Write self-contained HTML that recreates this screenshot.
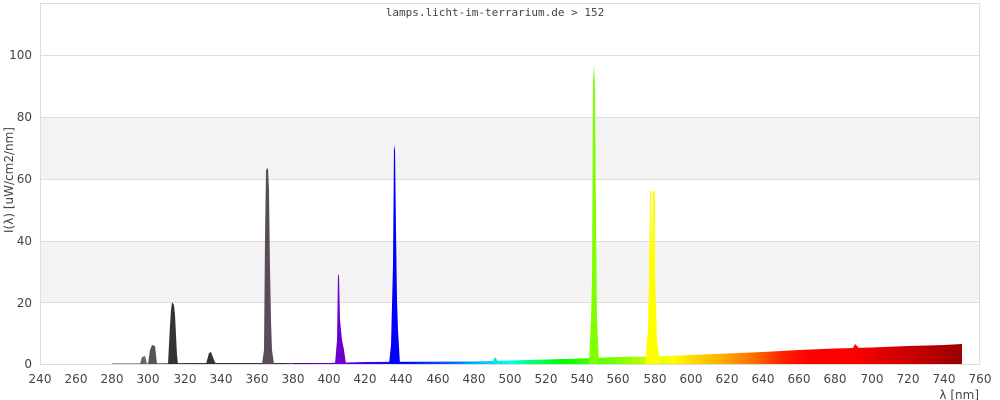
<!DOCTYPE html>
<html><head><meta charset="utf-8"><style>
html,body{margin:0;padding:0;background:#fff;}
svg{display:block;}
.t{font-family:"DejaVu Sans","Liberation Sans",sans-serif;font-size:12px;fill:#444;}
</style></head><body>
<svg width="1000" height="400" viewBox="0 0 1000 400" xmlns="http://www.w3.org/2000/svg">
<defs>
<linearGradient id="g" gradientUnits="userSpaceOnUse" x1="112" y1="0" x2="962" y2="0">
<stop offset="0" stop-color="#444"/>
<stop offset="0.2" stop-color="#333"/>
<stop offset="0.213" stop-color="#555"/>
<stop offset="0.213" stop-color="#5a0060"/>
<stop offset="0.25" stop-color="#6a00cc"/>
<stop offset="0.32" stop-color="#3300ff"/>
<stop offset="0.34" stop-color="#0000ff"/>
<stop offset="0.40" stop-color="#0066ff"/>
<stop offset="0.44" stop-color="#00ccff"/>
<stop offset="0.47" stop-color="#00ffee"/>
<stop offset="0.49" stop-color="#00ff80"/>
<stop offset="0.53" stop-color="#00ff00"/>
<stop offset="0.58" stop-color="#66ff00"/>
<stop offset="0.62" stop-color="#aaff00"/>
<stop offset="0.64" stop-color="#e0ff00"/>
<stop offset="0.66" stop-color="#ffff00"/>
<stop offset="0.69" stop-color="#ffd000"/>
<stop offset="0.72" stop-color="#ffaa00"/>
<stop offset="0.75" stop-color="#ff7700"/>
<stop offset="0.79" stop-color="#ff2000"/>
<stop offset="0.82" stop-color="#ff0000"/>
<stop offset="0.87" stop-color="#ff0000"/>
<stop offset="0.93" stop-color="#d00000"/>
<stop offset="1" stop-color="#990000"/>
</linearGradient>
</defs>
<rect x="40" y="117" width="940" height="62" fill="#f3f3f3"/>
<rect x="40" y="241" width="940" height="61" fill="#f3f3f3"/>
<g stroke="#dedede" stroke-width="1">
<line x1="40" y1="55.5" x2="980" y2="55.5"/>
<line x1="40" y1="117.5" x2="980" y2="117.5"/>
<line x1="40" y1="179.5" x2="980" y2="179.5"/>
<line x1="40" y1="241.5" x2="980" y2="241.5"/>
<line x1="40" y1="302.5" x2="980" y2="302.5"/>
</g>
<rect x="40.5" y="3.5" width="939" height="361" fill="none" stroke="#ddd"/>
<polygon fill="url(#g)" points="112,364 112,363.5 148,363.5 185,363 293,363 329,363 365,362 474,361.5 510,360.5 546,359.5 582,358.5 618,357 655,356.5 691,355 727,353.5 763,352 799,350 835,348.5 872,347.5 908,346 944,345 962,344 962,364"/>
<polygon fill="#666" points="140,364 142,357 145,356 147,364"/>
<polygon fill="#555" points="148,364 150,350 152,345 155,346 157,364"/>
<polygon fill="#333" points="168,364 170,325 171,310 172,302 174,305 175,315 176,335 177,355 178,364"/>
<polygon fill="#333" points="206,364 209,353 211,352 214,360 216,364"/>
<polygon fill="#5a4d5a" points="262,364 264,350 265,240 266,170 268,168 269,190 270,270 271,320 272,350 274,364"/>
<polygon fill="#6a00cc" points="335,364 337,340 338,274 339,276 340,320 342,340 344,350 346,364"/>
<polygon fill="#0000ff" points="389,364 391,345 393,265 394,145 395,150 396,230 397,300 398,330 400,364"/>
<polygon fill="#00f0d0" points="492,362 495,357 497,360 499,362"/>
<polygon fill="#80ff00" points="589,364 591,320 592,280 593,80 594,65 595,90 596,220 597,320 599,364"/>
<polygon fill="#ffff00" points="645,364 648,330 649,280 650,191 651,191 652,260 653,191 655,191 655,270 657,340 660,364"/>
<polygon fill="#ff0000" points="852,350 855,344 858,347 860,350"/>
<g class="t" text-anchor="end">
<text x="32" y="59">100</text>
<text x="32" y="121">80</text>
<text x="32" y="183">60</text>
<text x="32" y="245">40</text>
<text x="32" y="307">20</text>
<text x="32" y="368">0</text>
</g>
<g class="t" text-anchor="middle">
<text x="40" y="383">240</text><text x="76" y="383">260</text><text x="112" y="383">280</text><text x="148" y="383">300</text><text x="185" y="383">320</text><text x="221" y="383">340</text><text x="257" y="383">360</text><text x="293" y="383">380</text><text x="329" y="383">400</text><text x="365" y="383">420</text><text x="401" y="383">440</text><text x="438" y="383">460</text><text x="474" y="383">480</text><text x="510" y="383">500</text><text x="546" y="383">520</text><text x="582" y="383">540</text><text x="618" y="383">560</text><text x="655" y="383">580</text><text x="691" y="383">600</text><text x="727" y="383">620</text><text x="763" y="383">640</text><text x="799" y="383">660</text><text x="835" y="383">680</text><text x="872" y="383">700</text><text x="908" y="383">720</text><text x="944" y="383">740</text><text x="980" y="383">760</text>
</g>
<text class="t" x="979" y="399" text-anchor="end">λ [nm]</text>
<text class="t" transform="translate(13,180) rotate(-90)" text-anchor="middle">I(λ)  [uW/cm2/nm]</text>
<text x="495" y="16" text-anchor="middle" style="font-family:'DejaVu Sans Mono','Liberation Mono',monospace;font-size:11px;fill:#444">lamps.licht-im-terrarium.de &gt; 152</text>
</svg>
</body></html>
